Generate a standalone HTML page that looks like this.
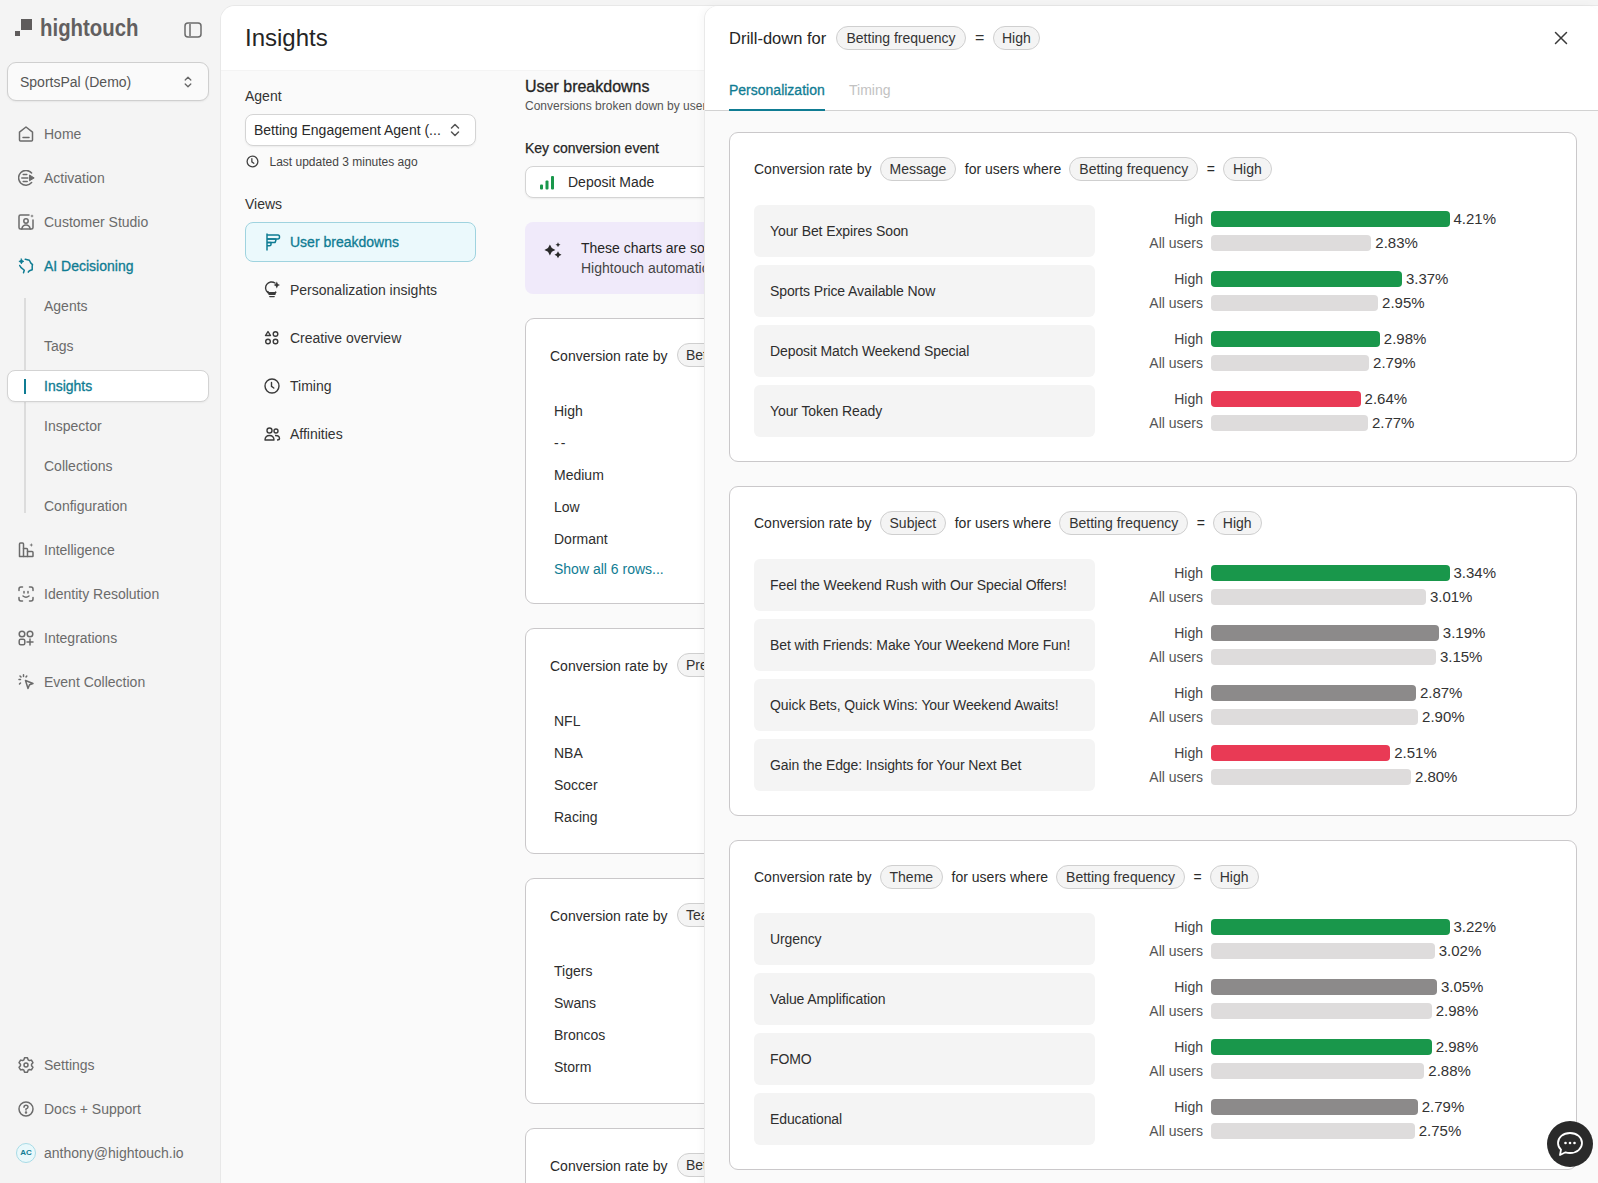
<!DOCTYPE html>
<html><head><meta charset="utf-8">
<style>
*{box-sizing:border-box;margin:0;padding:0}
html,body{width:1598px;height:1183px;overflow:hidden}
body{font-family:"Liberation Sans",sans-serif;background:#f4f4f4;color:#252525;position:relative;font-size:14px}
.a{position:absolute;white-space:nowrap}
svg{display:block}
/* sidebar */
.nav{position:absolute;left:44px;font-size:14px;color:#6b6b6b;line-height:16px}
.nico{position:absolute;left:18px;width:16px;height:16px}
.teal{color:#0f7c93;-webkit-text-stroke:0.3px #0f7c93}
/* main */
#main{position:absolute;left:221px;top:6px;width:1400px;height:1200px;background:#fafafa;border-top-left-radius:14px;box-shadow:0 0 0 1px #e8e8e8;overflow:hidden}
#mhead{position:absolute;left:0;top:0;right:0;height:64px;background:#fff;box-shadow:0 1px 0 #f4f4f4}
.lbl{position:absolute;font-size:14px;color:#333;line-height:16px}
.sel{position:absolute;background:#fff;border:1px solid #d4d4d4;border-radius:8px;box-shadow:0 1px 2px rgba(0,0,0,.06)}
.view{position:absolute;left:24px;width:231px;height:40px;font-size:14px;color:#333}
.view .t{position:absolute;left:45px;top:12px;line-height:16px}
.view svg{position:absolute;left:19px;top:12px}
.card{position:absolute;background:#fff;border:1px solid #cac8ca;border-radius:9px}
.pill{display:inline-block;height:24px;line-height:22px;padding:0 8px;border:1px solid #cfcfcf;border-radius:12px;background:#f4f4f4;color:#333;font-size:14px;vertical-align:middle}
.rowt{position:absolute;left:28px;font-size:14px;color:#2e2e2e;line-height:16px}
/* drawer */
#drawer{position:absolute;left:705px;top:6px;width:893px;height:1200px;background:#fafafa;border-radius:13px 9px 0 0;box-shadow:-1px 0 0 #e9e9e9,-3px 0 8px rgba(0,0,0,.035);overflow:hidden}
#dhead{position:absolute;left:0;top:0;width:900px;height:105px;background:#fff;border-bottom:1px solid #d2d2d2}
.dcard{position:absolute;left:24px;width:848px;height:330px;background:#fff;border:1px solid #cac8ca;border-radius:9px}
.chead{position:absolute;left:24px;top:23px;height:24px;font-size:14px;color:#2a2a2a;line-height:24px;white-space:nowrap}
.chead span.w{vertical-align:middle;margin-right:8px}
.chead .pill{margin-right:8.5px;padding:0 9px}
.msg{position:absolute;left:24px;width:341px;height:52px;background:#f4f4f4;border-radius:6px}
.msg .t{position:absolute;left:16px;top:18px;font-size:14px;line-height:16px;color:#2e2e2e;white-space:nowrap;letter-spacing:-0.1px}
.bl{position:absolute;right:373px;font-size:14px;line-height:16px;color:#444;text-align:right;white-space:nowrap}
.bar{position:absolute;left:481px;height:16px;border-radius:4px}
.pct{position:absolute;font-size:15px;line-height:16px;color:#333;white-space:nowrap}
.g{background:#19974b}.r{background:#e93a55}.d{background:#8c8a8a}.l{background:#dedcdc}
</style></head><body>

<!-- SIDEBAR -->
<div id="sidebar">
  <svg class="a" style="left:15px;top:19px" width="18" height="18" viewBox="0 0 18 18"><rect x="6" y="0" width="11" height="11" fill="#5f5c5c"/><rect x="0" y="12" width="5" height="5" fill="#5f5c5c"/></svg>
  <div class="a" style="left:40px;top:13.7px;font-size:24px;font-weight:bold;color:#625f60;letter-spacing:0px;line-height:28px;transform:scaleX(0.85);transform-origin:0 0">hightouch</div>
  <svg class="a" style="left:184px;top:22px" width="18" height="16" viewBox="0 0 18 16"><rect x="1" y="1" width="16" height="14" rx="3" fill="none" stroke="#6b6b6b" stroke-width="1.5"/><line x1="6" y1="2" x2="6" y2="14" stroke="#6b6b6b" stroke-width="1.5"/></svg>

  <div class="a" style="left:7px;top:62px;width:202px;height:39px;background:#fafafa;border:1px solid #cfcfcf;border-radius:9px;box-shadow:0 1px 2px rgba(0,0,0,.06)"></div>
  <div class="a" style="left:20px;top:74px;font-size:14px;color:#555;line-height:16px">SportsPal (Demo)</div>
  <svg class="a" style="left:183px;top:75px" width="10" height="14" viewBox="0 0 10 14"><path d="M2.2 5 L5 2.2 L7.8 5 M2.2 9 L5 11.8 L7.8 9" fill="none" stroke="#666" stroke-width="1.3" stroke-linecap="round" stroke-linejoin="round"/></svg>

  <svg class="a" style="left:18px;top:126px" width="16" height="16" viewBox="0 0 16 16" fill="none" stroke="#6b6b6b" stroke-width="1.5" stroke-linecap="round" stroke-linejoin="round"><path d="M1.5 14 V6.2 L8 1 L14.5 6.2 V14 Q14.5 15 13.5 15 H2.5 Q1.5 15 1.5 14Z"/><path d="M5 11.5 H11"/></svg>
  <svg class="a" style="left:18px;top:170px" width="17" height="16" viewBox="0 0 17 16" fill="none" stroke="#6b6b6b" stroke-width="1.5" stroke-linecap="round" stroke-linejoin="round"><path d="M13.6 3 A7.4 7.4 0 1 0 13.6 12.6"/><path d="M5.2 4.6 H8.8 M3.8 8 H9.8 M5.2 11.4 H9.2"/><path d="M11.8 5.2 L16.2 7.9 L11.8 10.6Z" fill="#6b6b6b" stroke-width="1"/></svg>
  <svg class="a" style="left:18px;top:213.5px" width="16" height="16" viewBox="0 0 16 16" fill="none" stroke="#6b6b6b" stroke-width="1.5" stroke-linecap="round" stroke-linejoin="round"><path d="M11 1 H2.5 Q1 1 1 2.5 V13.5 Q1 15 2.5 15 H13.5 Q15 15 15 13.5 V6"/><circle cx="8" cy="7" r="2.2"/><path d="M3.8 15 C4.3 12 6 11 8 11 C10 11 11.7 12 12.2 15"/><path d="M14 0.2 L14.5 1.5 L15.8 2 L14.5 2.5 L14 3.8 L13.5 2.5 L12.2 2 L13.5 1.5Z" fill="#6b6b6b" stroke="none"/></svg>
  <svg class="a" style="left:18px;top:257px" width="17" height="17" viewBox="0 0 17 17" fill="none" stroke="#0f7c93" stroke-width="1.5" stroke-linecap="round" stroke-linejoin="round"><path d="M7.2 2.3 L11.4 3.3 Q12 4.2 12.7 5.9 L14.5 7.6 L14.2 9.2 V12.7 L11.4 13.8 L10.3 15.1"/><path d="M1.7 8.5 Q2.5 10.5 4.6 11.8 L6.3 13.3 L5.5 15.8"/><path d="M3.4 1.9 L4.2 3.6 L5.9 4.4 L4.2 5.2 L3.4 6.9 L2.6 5.2 L0.9 4.4 L2.6 3.6Z" fill="#0f7c93" stroke-width="0.8"/></svg>
  <svg class="a" style="left:18px;top:542px" width="16" height="16" viewBox="0 0 16 16" fill="none" stroke="#6b6b6b" stroke-width="1.5" stroke-linecap="round" stroke-linejoin="round"><path d="M1.5 14.5 V2 Q1.5 1 2.5 1 H4.5 Q5.5 1 5.5 2 V14.5"/><path d="M5.5 6.5 H8.5 Q9.5 6.5 9.5 7.5 V14.5"/><path d="M9.5 9.5 H14 Q15 9.5 15 10.5 V14 Q15 14.5 14.5 14.5 H2"/><path d="M13.3 1 L13.8 2.5 L15.3 3 L13.8 3.5 L13.3 5 L12.8 3.5 L11.3 3 L12.8 2.5Z" fill="#6b6b6b" stroke="none"/></svg>
  <svg class="a" style="left:18px;top:586px" width="16" height="16" viewBox="0 0 16 16" fill="none" stroke="#6b6b6b" stroke-width="1.5" stroke-linecap="round" stroke-linejoin="round"><path d="M1 4.5 V3 Q1 1 3 1 H4.5 M11.5 1 H13 Q15 1 15 3 V4.5 M15 11.5 V13 Q15 15 13 15 H11.5 M4.5 15 H3 Q1 15 1 13 V11.5"/><path d="M6 5.5 V7 M10 5.5 V7"/><path d="M5 10 Q8 12.5 11 10"/></svg>
  <svg class="a" style="left:18px;top:630px" width="16" height="16" viewBox="0 0 16 16" fill="none" stroke="#6b6b6b" stroke-width="1.5" stroke-linecap="round" stroke-linejoin="round"><circle cx="4" cy="4" r="2.8"/><circle cx="12" cy="4" r="2.8"/><rect x="1.2" y="9.2" width="5.6" height="5.6" rx="1.5"/><path d="M12 9 V15 M9 12 H15"/></svg>
  <svg class="a" style="left:18px;top:674px" width="17" height="16" viewBox="0 0 17 16" fill="none" stroke="#6b6b6b" stroke-width="1.5" stroke-linecap="round" stroke-linejoin="round"><path d="M7.5 6.5 L15 9.5 L11.5 10.8 L10 14.5Z"/><path d="M5.5 0.8 V2.5 M1 5.5 H2.5 M2 2 L3 3 M8.8 2 L8 3 M2.5 9 L1.5 10"/></svg>
  <svg class="a" style="left:18px;top:1057px" width="16" height="16" viewBox="0 0 16 16" fill="none" stroke="#6b6b6b" stroke-width="1.5" stroke-linecap="round" stroke-linejoin="round"><path d="M5.90 2.81 L6.48 0.86 L9.52 0.86 L10.10 2.81 L11.45 3.59 L13.42 3.12 L14.94 5.74 L13.55 7.22 L13.55 8.78 L14.94 10.26 L13.42 12.88 L11.45 12.41 L10.10 13.19 L9.52 15.14 L6.48 15.14 L5.90 13.19 L4.55 12.41 L2.58 12.88 L1.06 10.26 L2.45 8.78 L2.45 7.22 L1.06 5.74 L2.58 3.12 L4.55 3.59Z"/><circle cx="8" cy="8" r="2"/></svg>
  <svg class="a" style="left:18px;top:1101px" width="16" height="16" viewBox="0 0 16 16" fill="none" stroke="#6b6b6b" stroke-width="1.5" stroke-linecap="round" stroke-linejoin="round"><circle cx="8" cy="8" r="7"/><path d="M6 6.2 Q6 4.2 8 4.2 Q10 4.2 10 6 Q10 7.3 8 8 V9"/><circle cx="8" cy="11.5" r="0.5" fill="#6b6b6b"/></svg>
  <div class="nav" style="top:126px">Home</div>
  <div class="nav" style="top:170px">Activation</div>
  <div class="nav" style="top:214px">Customer Studio</div>
  <div class="nav teal" style="top:258px">AI Decisioning</div>

  <div class="a" style="left:24px;top:298px;width:2px;height:215px;background:#dcdcdc"></div>
  <div class="nav" style="top:298px">Agents</div>
  <div class="nav" style="top:338px">Tags</div>
  <div class="a" style="left:7px;top:370px;width:202px;height:32px;background:#fff;border:1px solid #d3d3d3;border-radius:8px;box-shadow:0 1px 2px rgba(0,0,0,.05)"></div>
  <div class="a" style="left:24px;top:379px;width:2px;height:15px;background:#0f7c93"></div>
  <div class="nav teal" style="top:378px">Insights</div>
  <div class="nav" style="top:418px">Inspector</div>
  <div class="nav" style="top:458px">Collections</div>
  <div class="nav" style="top:498px">Configuration</div>

  <div class="nav" style="top:542px">Intelligence</div>
  <div class="nav" style="top:586px">Identity Resolution</div>
  <div class="nav" style="top:630px">Integrations</div>
  <div class="nav" style="top:674px">Event Collection</div>

  <div class="nav" style="top:1057px">Settings</div>
  <div class="nav" style="top:1101px">Docs + Support</div>
  <div class="nav" style="top:1145px">anthony@hightouch.io</div>
  <div class="a" style="left:16px;top:1143px;width:20px;height:20px;border-radius:10px;background:#e9f8fb;border:1px solid #a8dbe6;font-size:8px;color:#0f7c93;text-align:center;line-height:18px;font-weight:bold">AC</div>
</div>

<!-- MAIN -->
<div id="main">
  <div id="mhead"></div>
  <div class="a" style="left:24px;top:18px;font-size:24px;color:#252525;line-height:28px">Insights</div>

  <!-- left column -->
  <div class="lbl" style="left:24px;top:82px">Agent</div>
  <div class="sel" style="left:24px;top:108px;width:231px;height:32px"></div>
  <div class="a" style="left:33px;top:116px;font-size:14px;line-height:16px;color:#2a2a2a">Betting Engagement Agent (...</div>
  <svg class="a" style="left:229px;top:116px" width="10" height="16" viewBox="0 0 10 16"><path d="M1.5 6 L5 2.5 L8.5 6 M1.5 10 L5 13.5 L8.5 10" fill="none" stroke="#555" stroke-width="1.5" stroke-linecap="round" stroke-linejoin="round"/></svg>
  <svg class="a" style="left:25px;top:149px" width="13" height="13" viewBox="0 0 14 14"><circle cx="7" cy="7" r="5.8" fill="none" stroke="#444" stroke-width="1.4"/><path d="M6.3 3.8 V7.4 L8.4 9" fill="none" stroke="#444" stroke-width="1.4" stroke-linecap="round"/></svg>
  <div class="a" style="left:48.5px;top:149px;font-size:12px;line-height:14px;color:#444">Last updated 3 minutes ago</div>

  <div class="lbl" style="left:24px;top:189.5px">Views</div>
  <div class="view" style="top:216px;background:#ebf9fc;border:1px solid #9fd3df;border-radius:8px;color:#0f7c93">
    <svg width="16" height="18" viewBox="0 0 16 18" style="left:19px;top:10px" fill="none" stroke="#0f7c93" stroke-width="1.5" stroke-linejoin="round"><path d="M2 0.5 V17.5"/><path d="M2 2 H13 Q14.5 2 14.5 4 Q14.5 6 13 6 H2"/><path d="M2 6 H10.5 Q11 6 11 6.8 L10.3 9 Q10 9.5 9.5 9.5 H2"/><path d="M2 9.5 H6 V11.5 Q6 12.8 4.5 12.8 H2"/></svg>
    <div class="t" style="left:44px;top:11px;-webkit-text-stroke:0.3px #0f7c93">User breakdowns</div>
  </div>
  <div class="view" style="top:264px">
    <svg width="16" height="17" viewBox="0 0 16 17" style="top:11px" fill="none" stroke="#3a3a3a" stroke-width="1.4" stroke-linecap="round"><path d="M11 2 A6 6 0 1 0 12.2 10.8 C11.2 11.8 10.8 12.3 10.8 13.2 H5.2 C5.2 12.3 4.8 11.6 3.8 10.6"/><path d="M5.8 15.6 H10.2"/><path d="M12.8 0.5 L13.9 2.9 L16 4 L13.9 5.1 L12.8 7.5 L11.7 5.1 L9.6 4 L11.7 2.9Z" fill="#3a3a3a" stroke="none"/><path d="M5.5 12 H10.5" stroke-width="2"/></svg>
    <div class="t">Personalization insights</div>
  </div>
  <div class="view" style="top:312px">
    <svg width="16" height="16" viewBox="0 0 16 16"><path d="M4 1.5 L6.5 5.5 H1.5Z" fill="none" stroke="#3a3a3a" stroke-width="1.4" stroke-linejoin="round"/><circle cx="11.5" cy="4" r="2.3" fill="none" stroke="#3a3a3a" stroke-width="1.4"/><circle cx="4" cy="11.5" r="2.3" fill="none" stroke="#3a3a3a" stroke-width="1.4"/><circle cx="11.5" cy="11.5" r="2.3" fill="none" stroke="#3a3a3a" stroke-width="1.4"/></svg>
    <div class="t">Creative overview</div>
  </div>
  <div class="view" style="top:360px">
    <svg width="16" height="16" viewBox="0 0 16 16"><circle cx="8" cy="8" r="7" fill="none" stroke="#3a3a3a" stroke-width="1.4"/><path d="M7.5 4.5 V8.3 L9.8 10" fill="none" stroke="#3a3a3a" stroke-width="1.4" stroke-linecap="round"/></svg>
    <div class="t">Timing</div>
  </div>
  <div class="view" style="top:408px">
    <svg width="17" height="16" viewBox="0 0 17 16"><circle cx="5.5" cy="4.5" r="2.5" fill="none" stroke="#3a3a3a" stroke-width="1.4"/><circle cx="12" cy="5" r="2" fill="none" stroke="#3a3a3a" stroke-width="1.4"/><path d="M1 14 C1 10.5 3 9.5 5.5 9.5 C8 9.5 10 10.5 10 14 Z" fill="none" stroke="#3a3a3a" stroke-width="1.4" stroke-linejoin="round"/><path d="M11 9.5 C14 9.3 15.5 10.5 15.5 12.5 C15.5 13.5 14.5 14 13 14" fill="none" stroke="#3a3a3a" stroke-width="1.4"/></svg>
    <div class="t">Affinities</div>
  </div>

  <!-- middle column -->
  <div class="a" style="left:304px;top:70.5px;font-size:16px;line-height:20px;color:#252525;-webkit-text-stroke:0.3px #252525">User breakdowns</div>
  <div class="a" style="left:304px;top:92.5px;font-size:12px;line-height:14px;color:#555">Conversions broken down by user attributes</div>
  <div class="lbl" style="left:304px;top:134px;color:#252525;-webkit-text-stroke:0.25px #252525">Key conversion event</div>
  <div class="sel" style="left:304px;top:160px;width:700px;height:32px"></div>
  <svg class="a" style="left:319px;top:170px" width="15" height="14" viewBox="0 0 15 14"><rect x="0" y="8.5" width="3" height="5" rx="1" fill="#19974b"/><rect x="5.5" y="4.5" width="3" height="9" rx="1" fill="#19974b"/><rect x="11" y="0" width="3" height="13.5" rx="1" fill="#19974b"/></svg>
  <div class="a" style="left:347px;top:168px;font-size:14px;line-height:16px;color:#2a2a2a">Deposit Made</div>

  <div class="a" style="left:304px;top:216px;width:800px;height:72px;background:#f0eafa;border-radius:8px"></div>
  <svg class="a" style="left:322px;top:236px" width="20" height="19" viewBox="0 0 20 19"><path d="M6.9 2.4 L8.8 6 L12.4 7.9 L8.8 9.8 L6.9 13.4 L5 9.8 L1.4 7.9 L5 6Z" fill="#2a2a2a"/><path d="M15 0.3 L15.8 2 L17.5 2.8 L15.8 3.6 L15 5.3 L14.2 3.6 L12.5 2.8 L14.2 2Z" fill="#2a2a2a"/><path d="M15 9.2 L16.2 11.5 L18.5 12.7 L16.2 13.9 L15 16.2 L13.8 13.9 L11.5 12.7 L13.8 11.5Z" fill="#2a2a2a"/></svg>
  <div class="a" style="left:360px;top:232px;font-size:14px;line-height:20px;color:#252525">These charts are sorted by conversion lift</div>
  <div class="a" style="left:360px;top:252px;font-size:14px;line-height:20px;color:#444">Hightouch automatically identifies</div>

  <div class="card" style="left:304px;top:312px;width:900px;height:286px">
    <div class="a" style="left:24px;top:26.5px;font-size:14px;line-height:20px;color:#2a2a2a">Conversion rate by</div>
    <div class="a" style="left:151px;top:24px"><span class="pill">Betting frequency</span></div>
    <div class="rowt" style="top:84px">High</div>
    <div class="rowt" style="top:116px;letter-spacing:2px">--</div>
    <div class="rowt" style="top:148px">Medium</div>
    <div class="rowt" style="top:180px">Low</div>
    <div class="rowt" style="top:212px">Dormant</div>
    <div class="rowt" style="top:242px;color:#0f7c93">Show all 6 rows...</div>
  </div>
  <div class="card" style="left:304px;top:622px;width:900px;height:226px">
    <div class="a" style="left:24px;top:26.5px;font-size:14px;line-height:20px;color:#2a2a2a">Conversion rate by</div>
    <div class="a" style="left:151px;top:24px"><span class="pill">Preferred sport</span></div>
    <div class="rowt" style="top:84px">NFL</div>
    <div class="rowt" style="top:116px">NBA</div>
    <div class="rowt" style="top:148px">Soccer</div>
    <div class="rowt" style="top:180px">Racing</div>
  </div>
  <div class="card" style="left:304px;top:872px;width:900px;height:226px">
    <div class="a" style="left:24px;top:26.5px;font-size:14px;line-height:20px;color:#2a2a2a">Conversion rate by</div>
    <div class="a" style="left:151px;top:24px"><span class="pill">Team</span></div>
    <div class="rowt" style="top:84px">Tigers</div>
    <div class="rowt" style="top:116px">Swans</div>
    <div class="rowt" style="top:148px">Broncos</div>
    <div class="rowt" style="top:180px">Storm</div>
  </div>
  <div class="card" style="left:304px;top:1122px;width:900px;height:226px">
    <div class="a" style="left:24px;top:26.5px;font-size:14px;line-height:20px;color:#2a2a2a">Conversion rate by</div>
    <div class="a" style="left:151px;top:24px"><span class="pill">Betting frequency</span></div>
  </div>
</div>

<!-- DRAWER -->
<div id="drawer">
  <div id="dhead"></div>
  <div class="a" style="left:24px;top:22px;font-size:16.5px;line-height:20px;color:#252525">Drill-down for</div>
  <div class="a" style="left:131px;top:20px"><span class="pill" style="padding:0 9.5px">Betting frequency</span></div>
  <div class="a" style="left:270px;top:22px;font-size:16px;line-height:20px;color:#333">=</div>
  <div class="a" style="left:288px;top:20px"><span class="pill">High</span></div>
  <svg class="a" style="left:849px;top:25px" width="14" height="14" viewBox="0 0 14 14"><path d="M1.5 1.5 L12.5 12.5 M12.5 1.5 L1.5 12.5" stroke="#3a3a3a" stroke-width="1.5" stroke-linecap="round"/></svg>
  <div class="a" style="left:24px;top:76px;font-size:14px;line-height:16px;color:#0f7c93;-webkit-text-stroke:0.3px #0f7c93">Personalization</div>
  <div class="a" style="left:24px;top:103px;width:96px;height:2px;background:#0f7c93"></div>
  <div class="a" style="left:144px;top:76px;font-size:14px;line-height:16px;color:#c2c2c2">Timing</div>
  <div class="dcard" style="top:126px">
    <div class="chead"><span class="w">Conversion rate by</span><span class="pill">Message</span><span class="w">for users where</span><span class="pill">Betting frequency</span><span class="w">=</span><span class="pill">High</span></div>
    <div class="msg" style="top:72px"><div class="t">Your Bet Expires Soon</div></div>
    <div class="bl" style="top:78px">High</div><div class="bar g" style="top:78px;width:238.5px"></div><div class="pct" style="left:723.5px;top:78px">4.21%</div>
    <div class="bl" style="top:102px;color:#555">All users</div><div class="bar l" style="top:102px;width:160.3px"></div><div class="pct" style="left:645.3px;top:102px">2.83%</div>
    <div class="msg" style="top:132px"><div class="t">Sports Price Available Now</div></div>
    <div class="bl" style="top:138px">High</div><div class="bar g" style="top:138px;width:190.9px"></div><div class="pct" style="left:675.9px;top:138px">3.37%</div>
    <div class="bl" style="top:162px;color:#555">All users</div><div class="bar l" style="top:162px;width:167.1px"></div><div class="pct" style="left:652.1px;top:162px">2.95%</div>
    <div class="msg" style="top:192px"><div class="t">Deposit Match Weekend Special</div></div>
    <div class="bl" style="top:198px">High</div><div class="bar g" style="top:198px;width:168.8px"></div><div class="pct" style="left:653.8px;top:198px">2.98%</div>
    <div class="bl" style="top:222px;color:#555">All users</div><div class="bar l" style="top:222px;width:158.1px"></div><div class="pct" style="left:643.1px;top:222px">2.79%</div>
    <div class="msg" style="top:252px"><div class="t">Your Token Ready</div></div>
    <div class="bl" style="top:258px">High</div><div class="bar r" style="top:258px;width:149.6px"></div><div class="pct" style="left:634.6px;top:258px">2.64%</div>
    <div class="bl" style="top:282px;color:#555">All users</div><div class="bar l" style="top:282px;width:156.9px"></div><div class="pct" style="left:641.9px;top:282px">2.77%</div>
  </div>
  <div class="dcard" style="top:480px">
    <div class="chead"><span class="w">Conversion rate by</span><span class="pill">Subject</span><span class="w">for users where</span><span class="pill">Betting frequency</span><span class="w">=</span><span class="pill">High</span></div>
    <div class="msg" style="top:72px"><div class="t">Feel the Weekend Rush with Our Special Offers!</div></div>
    <div class="bl" style="top:78px">High</div><div class="bar g" style="top:78px;width:238.5px"></div><div class="pct" style="left:723.5px;top:78px">3.34%</div>
    <div class="bl" style="top:102px;color:#555">All users</div><div class="bar l" style="top:102px;width:214.9px"></div><div class="pct" style="left:699.9px;top:102px">3.01%</div>
    <div class="msg" style="top:132px"><div class="t">Bet with Friends: Make Your Weekend More Fun!</div></div>
    <div class="bl" style="top:138px">High</div><div class="bar d" style="top:138px;width:227.8px"></div><div class="pct" style="left:712.8px;top:138px">3.19%</div>
    <div class="bl" style="top:162px;color:#555">All users</div><div class="bar l" style="top:162px;width:224.9px"></div><div class="pct" style="left:709.9px;top:162px">3.15%</div>
    <div class="msg" style="top:192px"><div class="t">Quick Bets, Quick Wins: Your Weekend Awaits!</div></div>
    <div class="bl" style="top:198px">High</div><div class="bar d" style="top:198px;width:204.9px"></div><div class="pct" style="left:689.9px;top:198px">2.87%</div>
    <div class="bl" style="top:222px;color:#555">All users</div><div class="bar l" style="top:222px;width:207.1px"></div><div class="pct" style="left:692.1px;top:222px">2.90%</div>
    <div class="msg" style="top:252px"><div class="t">Gain the Edge: Insights for Your Next Bet</div></div>
    <div class="bl" style="top:258px">High</div><div class="bar r" style="top:258px;width:179.2px"></div><div class="pct" style="left:664.2px;top:258px">2.51%</div>
    <div class="bl" style="top:282px;color:#555">All users</div><div class="bar l" style="top:282px;width:199.9px"></div><div class="pct" style="left:684.9px;top:282px">2.80%</div>
  </div>
  <div class="dcard" style="top:834px">
    <div class="chead"><span class="w">Conversion rate by</span><span class="pill">Theme</span><span class="w">for users where</span><span class="pill">Betting frequency</span><span class="w">=</span><span class="pill">High</span></div>
    <div class="msg" style="top:72px"><div class="t">Urgency</div></div>
    <div class="bl" style="top:78px">High</div><div class="bar g" style="top:78px;width:238.5px"></div><div class="pct" style="left:723.5px;top:78px">3.22%</div>
    <div class="bl" style="top:102px;color:#555">All users</div><div class="bar l" style="top:102px;width:223.7px"></div><div class="pct" style="left:708.7px;top:102px">3.02%</div>
    <div class="msg" style="top:132px"><div class="t">Value Amplification</div></div>
    <div class="bl" style="top:138px">High</div><div class="bar d" style="top:138px;width:225.9px"></div><div class="pct" style="left:710.9px;top:138px">3.05%</div>
    <div class="bl" style="top:162px;color:#555">All users</div><div class="bar l" style="top:162px;width:220.7px"></div><div class="pct" style="left:705.7px;top:162px">2.98%</div>
    <div class="msg" style="top:192px"><div class="t">FOMO</div></div>
    <div class="bl" style="top:198px">High</div><div class="bar g" style="top:198px;width:220.7px"></div><div class="pct" style="left:705.7px;top:198px">2.98%</div>
    <div class="bl" style="top:222px;color:#555">All users</div><div class="bar l" style="top:222px;width:213.3px"></div><div class="pct" style="left:698.3px;top:222px">2.88%</div>
    <div class="msg" style="top:252px"><div class="t">Educational</div></div>
    <div class="bl" style="top:258px">High</div><div class="bar d" style="top:258px;width:206.7px"></div><div class="pct" style="left:691.7px;top:258px">2.79%</div>
    <div class="bl" style="top:282px;color:#555">All users</div><div class="bar l" style="top:282px;width:203.7px"></div><div class="pct" style="left:688.7px;top:282px">2.75%</div>
  </div>
</div>

<div class="a" style="left:1547px;top:1121px;width:46px;height:46px;border-radius:23px;background:#2a2a2a"></div>
<svg class="a" style="left:1555px;top:1130px" width="30" height="28" viewBox="0 0 30 28"><path d="M15 3 C8 3 3 7.5 3 13 C3 15.6 4.1 17.8 6 19.6 L5 25 L10.5 22.3 C11.9 22.8 13.4 23 15 23 C22 23 27 18.5 27 13 C27 7.5 22 3 15 3Z" fill="none" stroke="#fff" stroke-width="1.8" stroke-linejoin="round"/><circle cx="10.5" cy="13" r="1.3" fill="#fff"/><circle cx="15" cy="13" r="1.3" fill="#fff"/><circle cx="19.5" cy="13" r="1.3" fill="#fff"/></svg>

</body></html>
